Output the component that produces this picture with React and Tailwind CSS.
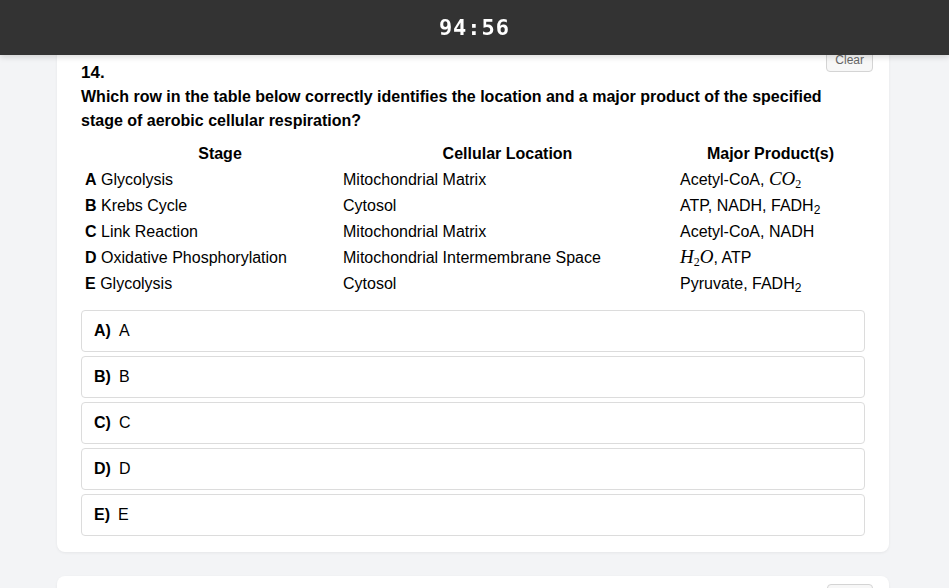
import React from "react";

const rows = [
  ["A", "Glycolysis", "Mitochondrial Matrix", <>Acetyl-CoA, <M>CO<sub className="text-[12px] not-italic">2</sub></M></>],
  ["B", "Krebs Cycle", "Cytosol", <>ATP, NADH, FADH<sub className="text-[12px]">2</sub></>],
  ["C", "Link Reaction", "Mitochondrial Matrix", <>Acetyl-CoA, NADH</>],
  ["D", "Oxidative Phosphorylation", "Mitochondrial Intermembrane Space", <><M>H<sub className="text-[12px] not-italic">2</sub>O</M>, ATP</>],
  ["E", "Glycolysis", "Cytosol", <>Pyruvate, FADH<sub className="text-[12px]">2</sub></>],
];

function M({ children }) {
  return (
    <span className="italic text-[19px] leading-none" style={{ fontFamily: '"Liberation Serif", "DejaVu Serif", serif' }}>
      {children}
    </span>
  );
}

export default function App() {
  return (
    <div className="bg-[#f3f4f6] text-black overflow-hidden h-[588px]" style={{ fontFamily: '"Liberation Sans", Arial, sans-serif' }}>
      <div className="fixed top-0 left-0 right-0 z-10 h-[55px] bg-[#333333] flex items-center justify-center shadow-[0_2px_6px_rgba(0,0,0,0.15)]">
        <span className="text-white text-[22px] font-bold tracking-[1px]" style={{ fontFamily: '"DejaVu Sans Mono", monospace' }}>
          94:56
        </span>
      </div>

      <div className="pt-[37px] flex flex-col gap-6">
        <div className="relative ml-[57px] w-[832px] bg-white rounded-lg shadow-[0_1px_3px_rgba(0,0,0,0.06)] px-6 pt-6 pb-4">
          <button className="absolute right-4 top-[11px] h-6 px-2 text-[12px] text-[#666] bg-[#f7f7f7] border border-[#d4d4d4] rounded">
            Clear
          </button>
          <div className="text-[17px] font-bold leading-6">14.</div>
          <div className="text-[16px] font-bold leading-6 pr-10">
            Which row in the table below correctly identifies the location and a major product of the specified stage of aerobic cellular respiration?
          </div>
          <table className="mt-2 w-[784px] table-fixed border-collapse text-[16px]">
            <colgroup>
              <col className="w-[258px]" />
              <col className="w-[337px]" />
              <col className="w-[189px]" />
            </colgroup>
            <thead>
              <tr className="h-[26px]">
                <th className="px-1 pl-6 text-center font-bold">Stage</th>
                <th className="px-1 text-center font-bold">Cellular Location</th>
                <th className="px-1 text-center font-bold">Major Product(s)</th>
              </tr>
            </thead>
            <tbody>
              {rows.map(([l, s, loc, p]) => (
                <tr key={l} className="h-[26px]">
                  <td className="px-1 whitespace-nowrap"><b>{l}</b> {s}</td>
                  <td className="px-1 whitespace-nowrap">{loc}</td>
                  <td className="px-1 whitespace-nowrap">{p}</td>
                </tr>
              ))}
            </tbody>
          </table>
          <div className="mt-[13px] flex flex-col gap-1">
            {["A", "B", "C", "D", "E"].map((l) => (
              <div key={l} className="h-[42px] border border-[#dcdcdc] rounded flex items-center px-3 text-[16px]">
                <b className="mr-2">{l})</b>
                <span>{l}</span>
              </div>
            ))}
          </div>
        </div>

        <div className="relative ml-[57px] w-[832px] h-[200px] bg-white rounded-lg shadow-[0_1px_3px_rgba(0,0,0,0.06)]">
          <button className="absolute right-4 top-2 h-6 px-2 bg-[#f7f7f7] border border-[#d4d4d4] rounded w-[46px]" aria-label="Clear" />
        </div>
      </div>
    </div>
  );
}
